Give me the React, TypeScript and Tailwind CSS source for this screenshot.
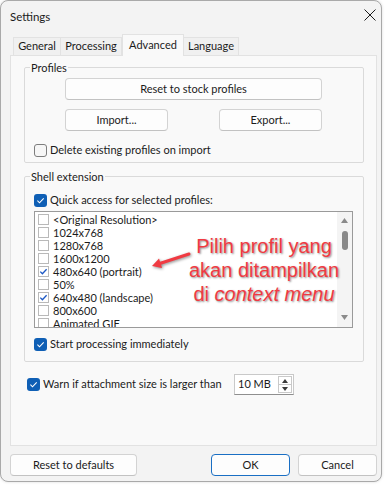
import React from 'react';

const ui = "font-['Lato','Noto_Sans',sans-serif] text-[11px] text-[#1b1b1b]";

const Check = ({ checked }: { checked: boolean }) =>
  checked ? (
    <span className="flex h-[13px] w-[13px] shrink-0 items-center justify-center rounded-[3px] bg-[#0f5fb5]">
      <svg width="9" height="9" viewBox="0 0 9 9">
        <path d="M1.4 4.7 L3.5 6.8 L7.7 2.3" fill="none" stroke="white" strokeWidth="1.1" />
      </svg>
    </span>
  ) : (
    <span className="h-[13px] w-[13px] shrink-0 rounded-[3px] border border-[#7d7d7d] bg-[#f6f6f6]" />
  );

const ListCheck = ({ checked }: { checked: boolean }) => (
  <span className="flex h-[11px] w-[11px] shrink-0 items-center justify-center border border-[#b9b9b9] bg-white">
    {checked && (
      <svg width="9" height="9" viewBox="0 0 9 9">
        <path d="M1.3 4.6 L3.4 6.8 L7.6 2.2" fill="none" stroke="#1c58c4" strokeWidth="1.3" />
      </svg>
    )}
  </span>
);

const Button = ({ label, className = '', primary = false }: { label: string; className?: string; primary?: boolean }) => (
  <button
    className={`flex h-[22px] items-center justify-center rounded-[4px] border bg-[#fdfdfd] ${
      primary ? 'border-[#1a6fc4]' : 'border-[#d3d3d3] border-b-[#c2c2c2]'
    } ${className}`}
  >
    {label}
  </button>
);

const profiles = [
  { name: '<Original Resolution>', checked: false },
  { name: '1024x768', checked: false },
  { name: '1280x768', checked: false },
  { name: '1600x1200', checked: false },
  { name: '480x640 (portrait)', checked: true },
  { name: '50%', checked: false },
  { name: '640x480 (landscape)', checked: true },
  { name: '800x600', checked: false },
  { name: 'Animated GIF', checked: false },
];

export default function App() {
  return (
    <div className={`relative h-[486px] w-[387px] overflow-hidden bg-white ${ui}`}>
      <div className="flex h-[482px] w-[382px] flex-col rounded-[8px] border border-[#a9a9a9] bg-[#f3f3f3] shadow-[0_0_3px_rgba(0,0,0,0.15)]">
        {/* title bar */}
        <div className="flex h-[33px] shrink-0 items-start justify-between pl-[9px] pr-[5px] pt-[7px]">
          <span className="text-[11.5px]">Settings</span>
          <svg width="12" height="12" viewBox="0 0 12 12" className="mt-[1px]">
            <path d="M0.5 0.5 L11.5 11.5 M11.5 0.5 L0.5 11.5" stroke="#1b1b1b" strokeWidth="1" />
          </svg>
        </div>

        {/* tabs */}
        <div className="flex h-[21px] shrink-0 items-end pl-[12px]">
          <div className="flex h-[18px] w-[47px] items-center justify-center border-l border-t border-[#e2e2e2] bg-[#f0f0f0]">General</div>
          <div className="flex h-[18px] w-[62px] items-center justify-center border-x border-t border-[#e2e2e2] bg-[#f0f0f0]">Processing</div>
          <div className="relative z-10 -mb-px flex h-[22px] w-[62px] items-start justify-center border-x border-t border-[#e2e2e2] bg-[#f9f9f9] pt-[2px]">Advanced</div>
          <div className="flex h-[18px] w-[55px] items-center justify-center border-r border-t border-[#e2e2e2] bg-[#f0f0f0]">Language</div>
        </div>

        {/* panel */}
        <div className="ml-[9px] h-[391px] w-[367px] shrink-0 border border-[#e2e2e2] bg-[#f9f9f9] pt-[4px]">
          <fieldset className="ml-[13px] h-[103px] w-[340px] rounded-[2px] border border-[#dadada] pl-[9px]">
            <legend className="-ml-[4px] px-[1px] leading-[15px]">Profiles</legend>
            <Button label="Reset to stock profiles" className="ml-[31px] mt-[3px] w-[257px]" />
            <div className="ml-[31px] mt-[9px] flex w-[257px] justify-between">
              <Button label="Import..." className="w-[103px]" />
              <Button label="Export..." className="w-[103px]" />
            </div>
            <label className="mt-[12px] flex h-[14px] items-center gap-[3px]">
              <Check checked={false} />
              <span>Delete existing profiles on import</span>
            </label>
          </fieldset>

          <fieldset className="ml-[13px] mt-[6px] h-[193px] w-[340px] rounded-[2px] border border-[#dadada] pl-[9px]">
            <legend className="-ml-[4px] px-[1px] leading-[15px]">Shell extension</legend>
            <label className="mt-[9px] flex h-[14px] items-center gap-[3px]">
              <Check checked={true} />
              <span>Quick access for selected profiles:</span>
            </label>
            <div className="mt-[4px] flex h-[117px] w-[319px] overflow-hidden border border-[#9a9a9a] bg-white">
              <div className="flex-1 pl-[3px] pt-[1px]">
                {profiles.map((p) => (
                  <div key={p.name} className="flex h-[13px] items-center gap-[4px] leading-[13px]">
                    <ListCheck checked={p.checked} />
                    <span>{p.name}</span>
                  </div>
                ))}
              </div>
              <div className="flex w-[15px] flex-col items-center bg-[#f4f4f4] pt-[6px]">
                <svg width="7" height="5" viewBox="0 0 7 5">
                  <path d="M3.5 0 L7 5 L0 5 Z" fill="#8a8a8a" />
                </svg>
                <div className="mt-[8px] h-[19px] w-[6px] rounded-full bg-[#8a8a8a]" />
                <svg width="7" height="5" viewBox="0 0 7 5" className="mt-auto mb-[7px]">
                  <path d="M0 0 L7 0 L3.5 5 Z" fill="#8a8a8a" />
                </svg>
              </div>
            </div>
            <label className="mt-[9px] flex h-[14px] items-center gap-[3px]">
              <Check checked={true} />
              <span>Start processing immediately</span>
            </label>
          </fieldset>

          <div className="ml-[16px] mt-[12px] flex h-[21px] items-center">
            <Check checked={true} />
            <span className="ml-[3px] shrink-0 whitespace-nowrap">Warn if attachment size is larger than</span>
            <div className="ml-auto mr-[82px] flex h-[21px] w-[60px] shrink-0 items-center border border-[#c9c9c9] border-b-[#8f8f8f] bg-white">
              <span className="flex-1 pl-[3px]">10 MB</span>
              <div className="mr-[1px] flex h-[17px] w-[14px] flex-col border border-[#c9c9c9]">
                <div className="flex flex-1 items-center justify-center border-b border-[#c9c9c9]">
                  <svg width="6" height="4" viewBox="0 0 6 4"><path d="M3 0 L6 4 L0 4 Z" fill="#3a3a3a" /></svg>
                </div>
                <div className="flex flex-1 items-center justify-center">
                  <svg width="6" height="4" viewBox="0 0 6 4"><path d="M0 0 L6 0 L3 4 Z" fill="#3a3a3a" /></svg>
                </div>
              </div>
            </div>
          </div>
        </div>

        {/* footer */}
        <div className="mt-[8px] flex pl-[9px] pr-[4px]">
          <Button label="Reset to defaults" className="w-[127px]" />
          <Button label="OK" primary className="ml-auto w-[79px]" />
          <Button label="Cancel" className="ml-[8px] w-[79px]" />
        </div>
      </div>

      {/* red annotation over the list */}
      <svg width="50" height="30" viewBox="0 0 50 30" className="absolute left-[145px] top-[245px] drop-shadow-[1px_1px_1.5px_rgba(0,0,0,0.45)]">
        <path d="M44 9 L15.5 18.2" stroke="#f03a42" strokeWidth="3" strokeLinecap="round" />
        <path d="M7 21 L17.1 23 L14 13.5 Z" fill="#f03a42" />
      </svg>
      <div className="absolute left-[169px] top-[234px] w-[190px] text-center font-['Liberation_Sans',Arial,sans-serif] text-[20px] leading-[24px] text-[#f03a42] [text-shadow:1px_1px_2px_rgba(0,0,0,0.45)]">
        <div>Pilih profil yang</div>
        <div>akan ditampilkan</div>
        <div>
          di <i>context menu</i>
        </div>
      </div>
    </div>
  );
}
